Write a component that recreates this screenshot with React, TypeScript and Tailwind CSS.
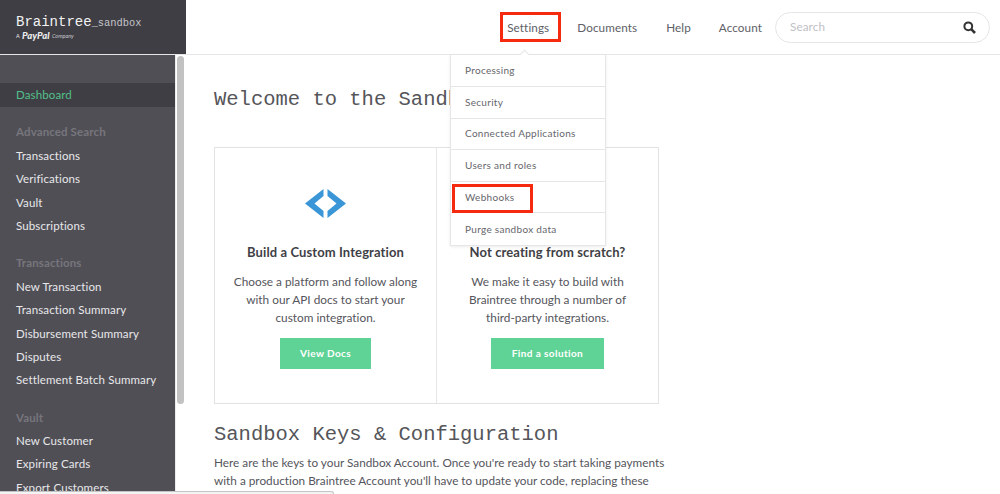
import React from "react";

const Search = () => (
  <svg width="13" height="13" viewBox="0 0 13 13" fill="none" stroke="#333" strokeWidth="2">
    <circle cx="5.3" cy="5.3" r="3.9" />
    <path d="M8.2 8.2 L12 12" strokeWidth="2.6" />
  </svg>
);

const Code = () => (
  <svg width="41" height="29" viewBox="0 0 41 29" fill="#3b96d8">
    <path d="M18.5 0 L18.5 7 L9.5 14.5 L18.5 22 L18.5 29 L0 14.5 Z" />
    <path d="M22.5 0 L41 14.5 L22.5 29 L22.5 22 L31.5 14.5 L22.5 7 Z" />
  </svg>
);

const groups: { title: string; items: string[]; cls: string; head: string }[] = [
  { title: "Advanced Search", items: ["Transactions", "Verifications", "Vault", "Subscriptions"], cls: "mt-[13px] mb-[7px]", head: "h-[23.8px]" },
  { title: "Transactions", items: ["New Transaction", "Transaction Summary", "Disbursement Summary", "Disputes", "Settlement Batch Summary"], cls: "mt-[13.8px] mb-[7px]", head: "h-[23.5px]" },
  { title: "Vault", items: ["New Customer", "Expiring Cards", "Export Customers"], cls: "mt-[13.8px] mb-[7px]", head: "h-[23.5px]" },
];

const menu = ["Processing", "Security", "Connected Applications", "Users and roles", "Webhooks", "Purge sandbox data"];

const Card = ({ icon, title, lines, cta, left, btn }: { icon?: React.ReactNode; title: string; lines: string[]; cta: string; left?: boolean; btn: string }) => (
  <div className={`flex-1 flex flex-col items-center ${left ? "border-r border-[#e6e6e8]" : ""}`}>
    <div className="h-[39px] mt-[36px] flex items-center justify-center">{icon}</div>
    <div className="mt-[19px] text-[13px] leading-[20px] font-bold text-[#3f3f46] tracking-[0.1px]">{title}</div>
    <div className="mt-[11px] text-[11.8px] leading-[18px] text-[#55555c] text-center tracking-[0.01px]">
      {lines.map((l) => (
        <div key={l}>{l}</div>
      ))}
    </div>
    <div className={`mt-[11px] bg-[#5fd396] text-white text-[10px] font-bold tracking-[0.4px] h-[31px] flex items-center justify-center ${btn}`}>
      {cta}
    </div>
  </div>
);

export default function App() {
  return (
    <div className="relative w-[1000px] h-[494px] overflow-hidden bg-white flex flex-col font-['Lato',sans-serif]">
      <div className="flex h-[55px] shrink-0 border-b border-[#e6e6e8]">
        <div className="w-[186px] shrink-0 bg-[#3f3e45] pl-[16px] pt-[15px] text-white">
          <div className="flex items-baseline font-['Liberation_Mono',monospace] leading-[14px]">
            <span className="text-[14px] text-[#f2f2f2]">Braintree</span>
            <span className="text-[10.4px] text-[#c4c4c8]">_sandbox</span>
          </div>
          <div className="flex items-center mt-[1px] leading-[10px] text-[#ececec]">
            <span className="text-[5.5px] w-[6px]">A</span>
            <span className="text-[9.5px] font-black italic w-[30px]">PayPal</span>
            <span className="text-[5.5px] italic text-[#c8c8cc]">Company</span>
          </div>
        </div>
        <div className="flex-1 flex items-center justify-end pr-[10px] text-[11.7px] text-[#606066] tracking-[0.1px]">
          <span className="mr-[28px] mt-[1px]">Settings</span>
          <span className="mr-[29px] mt-[1px]">Documents</span>
          <span className="mr-[28px] mt-[1px]">Help</span>
          <span className="mr-[13px] mt-[1px]">Account</span>
          <div className="w-[215px] h-[31px] rounded-full border border-[#e6e6e8] flex items-center justify-between pl-[14px] pr-[13px]">
            <span className="text-[#c0c0c4]">Search</span>
            <Search />
          </div>
        </div>
      </div>

      <div className="flex flex-1 min-h-0">
        <div className="w-[175px] shrink-0 bg-[#504f56] pt-[28px] text-[11.5px] overflow-hidden text-[#e8e8ea] tracking-[0.12px]">
          <div className="h-[24px] bg-[#3f3e45] pl-[16px] flex items-center text-[#54c08a]">Dashboard</div>
          {groups.map((g) => (
            <div key={g.title} className={g.cls}>
              <div className={`pl-[16px] ${g.head} flex items-center font-bold text-[#77767c]`}>{g.title}</div>
              {g.items.map((it) => (
                <div key={it} className="pl-[16px] h-[23.4px] flex items-center whitespace-nowrap">
                  {it}
                </div>
              ))}
            </div>
          ))}
        </div>
        <div className="w-[11px] shrink-0 bg-white border-l border-[#ececec] pl-[1px] pt-[1px]">
          <div className="w-[7px] h-[348px] rounded-full bg-[#c2c2c2]" />
        </div>
        <div className="flex-1 min-w-0 pl-[28px] overflow-hidden">
          <div className="mt-[33px] text-[20.5px] leading-[24px] text-[#55555a] font-['Liberation_Mono',monospace]">Welcome to the Sandbox</div>
          <div className="mt-[35px] w-[445px] h-[257px] border border-[#e2e2e4] flex">
            <Card left icon={<Code />} title="Build a Custom Integration" lines={["Choose a platform and follow along", "with our API docs to start your", "custom integration."]} cta="View Docs" btn="w-[91px]" />
            <Card title="Not creating from scratch?" lines={["We make it easy to build with", "Braintree through a number of", "third-party integrations."]} cta="Find a solution" btn="w-[113px]" />
          </div>
          <div className="mt-[19px] text-[20.5px] leading-[24px] text-[#55555a] font-['Liberation_Mono',monospace]">Sandbox Keys &amp; Configuration</div>
          <div className="mt-[7px] w-[460px] text-[11.75px] leading-[17.5px] text-[#55555c] tracking-[0.01px]">
            Here are the keys to your Sandbox Account. Once you're ready to start taking payments with a production Braintree Account you'll have to update your code, replacing these
          </div>
        </div>
      </div>

      {/* browser status bubble */}
      <div className="absolute left-0 w-[334px] bottom-0 h-[3px] bg-[#f4f4f4] border-t border-r border-[#c4c4c4] rounded-tr-[3px]" />

      {/* dropdown */}
      <div className="absolute left-[450px] top-[55px] w-[156px] pt-[0.5px] bg-white border-x border-b border-[#e6e6e8] shadow-[0_1px_3px_rgba(0,0,0,0.08)] text-[10px] text-[#66666c] tracking-[0.3px]">
        {menu.map((m, i) => (
          <div key={m} className={`h-[31.6px] pl-[14px] flex items-center ${i < menu.length - 1 ? "border-b border-[#e6e6e8]" : ""}`}>
            {m}
          </div>
        ))}
      </div>
      <div className="absolute left-[521px] top-[51px] w-[7px] h-[7px] rotate-45 bg-white border-l border-t border-[#e6e6e8]" />

      {/* annotations */}
      <div className="absolute left-[500px] top-[12px] w-[61px] h-[30px] border-[3px] border-[#f52a0e]" />
      <div className="absolute left-[452px] top-[184px] w-[81px] h-[29px] border-[3px] border-[#f52a0e]" />
    </div>
  );
}
